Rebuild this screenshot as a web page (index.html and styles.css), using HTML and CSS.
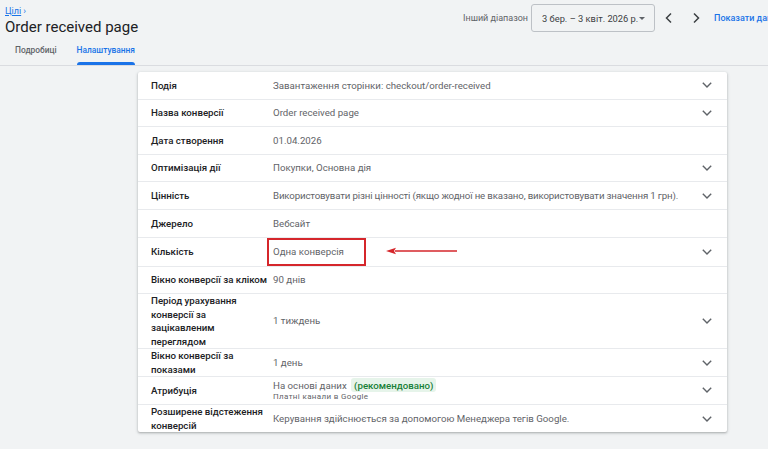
FILE: index.html
```html
<!DOCTYPE html>
<html lang="uk">
<head>
<meta charset="utf-8">
<title>Order received page</title>
<link rel="stylesheet" href="styles.css">
</head>
<body>
<header class="top">
  <div class="title-block">
    <div class="crumbs"><a class="crumb" href="#">Цілі</a><span class="crumb-sep">›</span></div>
    <h1 class="title">Order received page</h1>
  </div>
  <div class="controls">
    <span class="range-label">Інший діапазон</span>
    <div class="range-select">
      <span>3 бер. – 3 квіт. 2026 р.</span>
      <span class="tri"></span>
    </div>
    <svg class="nav" width="16" height="16" viewBox="0 0 16 16"><path d="M10 3.5 5.5 8l4.5 4.5" fill="none" stroke="#3c4043" stroke-width="1.5"/></svg>
    <svg class="nav" width="16" height="16" viewBox="0 0 16 16"><path d="M6 3.5 10.5 8 6 12.5" fill="none" stroke="#3c4043" stroke-width="1.5"/></svg>
    <span class="show">Показати дані</span>
  </div>
</header>
<nav class="tabs">
  <span class="tab">Подробиці</span>
  <span class="tab active">Налаштування</span>
</nav>
<main class="card">
  <div class="row"><div class="label">Подія</div><div class="value">Завантаження сторінки: checkout/order-received</div><div class="chev"><svg width="10" height="6" viewBox="0 0 10 6"><path d="M.8 .8 5 5 9.2 .8" fill="none" stroke="#5f6368" stroke-width="1.4"/></svg></div></div>
  <div class="row"><div class="label">Назва конверсії</div><div class="value">Order received page</div><div class="chev"><svg width="10" height="6" viewBox="0 0 10 6"><path d="M.8 .8 5 5 9.2 .8" fill="none" stroke="#5f6368" stroke-width="1.4"/></svg></div></div>
  <div class="row"><div class="label">Дата створення</div><div class="value">01.04.2026</div><div class="chev"></div></div>
  <div class="row"><div class="label">Оптимізація дії</div><div class="value">Покупки, Основна дія</div><div class="chev"><svg width="10" height="6" viewBox="0 0 10 6"><path d="M.8 .8 5 5 9.2 .8" fill="none" stroke="#5f6368" stroke-width="1.4"/></svg></div></div>
  <div class="row"><div class="label">Цінність</div><div class="value value-tight">Використовувати різні цінності (якщо жодної не вказано, використовувати значення 1 грн).</div><div class="chev"><svg width="10" height="6" viewBox="0 0 10 6"><path d="M.8 .8 5 5 9.2 .8" fill="none" stroke="#5f6368" stroke-width="1.4"/></svg></div></div>
  <div class="row"><div class="label">Джерело</div><div class="value">Вебсайт</div><div class="chev"></div></div>
  <div class="row"><div class="label">Кількість</div><div class="value value-inline"><span class="highlight">Одна конверсія</span><span class="arrow"><svg width="72" height="10" viewBox="0 0 72 10"><path d="M9 5H71" stroke="#d5262b" stroke-width="1.4"/><path d="M0 5 10 1.8 8 5 10 8.2Z" fill="#d5262b"/></svg></span></div><div class="chev"><svg width="10" height="6" viewBox="0 0 10 6"><path d="M.8 .8 5 5 9.2 .8" fill="none" stroke="#5f6368" stroke-width="1.4"/></svg></div></div>
  <div class="row"><div class="label">Вікно конверсії за кліком</div><div class="value">90 днів</div><div class="chev"></div></div>
  <div class="row"><div class="label">Період урахування конверсії за зацікавленим переглядом</div><div class="value">1 тиждень</div><div class="chev"><svg width="10" height="6" viewBox="0 0 10 6"><path d="M.8 .8 5 5 9.2 .8" fill="none" stroke="#5f6368" stroke-width="1.4"/></svg></div></div>
  <div class="row"><div class="label">Вікно конверсії за показами</div><div class="value">1 день</div><div class="chev"><svg width="10" height="6" viewBox="0 0 10 6"><path d="M.8 .8 5 5 9.2 .8" fill="none" stroke="#5f6368" stroke-width="1.4"/></svg></div></div>
  <div class="row"><div class="label">Атрибуція</div><div class="value"><div>На основі даних <span class="badge">(рекомендовано)</span></div><div class="sub">Платні канали в Google</div></div><div class="chev"><svg width="10" height="6" viewBox="0 0 10 6"><path d="M.8 .8 5 5 9.2 .8" fill="none" stroke="#5f6368" stroke-width="1.4"/></svg></div></div>
  <div class="row"><div class="label">Розширене відстеження конверсій</div><div class="value">Керування здійснюється за допомогою Менеджера тегів Google.</div><div class="chev"><svg width="10" height="6" viewBox="0 0 10 6"><path d="M.8 .8 5 5 9.2 .8" fill="none" stroke="#5f6368" stroke-width="1.4"/></svg></div></div>
</main>
</body>
</html>
```

FILE: styles.css
```css
* { box-sizing: border-box; }
html, body { margin: 0; }
body {
  background: #f1f3f4;
  font-family: Roboto, "Noto Sans", Arial, sans-serif;
  color: #202124;
  width: 768px;
  height: 449px;
  overflow: hidden;
}
.top {
  display: flex;
  justify-content: space-between;
  align-items: flex-start;
  height: 40px;
  padding-left: 5px;
}
.title-block { padding-top: 6px; }
.crumbs { font-size: 9px; line-height: 11px; height: 11px; }
.crumb { color: #1a73e8; text-decoration: underline; }
.crumb-sep { color: #1a73e8; margin-left: 2px; }
.title {
  margin: 0;
  font-size: 15px;
  font-weight: 400;
  line-height: 20px;
  color: #202124;
}
.controls {
  display: flex;
  align-items: center;
  padding-top: 4px;
  white-space: nowrap;
  width: 305px;
  overflow: hidden;
  flex-shrink: 0;
}
.range-label { font-size: 9px; color: #5f6368; margin-right: 3px; flex-shrink: 0; }
.range-select {
  display: flex;
  align-items: center;
  justify-content: space-between;
  width: 124px;
  height: 28px;
  border: 1px solid #bdc1c6;
  border-radius: 3px;
  padding: 0 9px 0 10px;
  font-size: 9.3px;
  color: #3c4043;
  flex-shrink: 0;
}
.tri {
  width: 0; height: 0;
  border-left: 3.5px solid transparent;
  border-right: 3.5px solid transparent;
  border-top: 3.5px solid #5f6368;
}
.nav { flex-shrink: 0; margin-left: 6px; margin-right: 5px; }
.show { font-size: 9px; color: #1a73e8; font-weight: 500; margin-left: 5px; flex-shrink: 0; }
.tabs {
  display: flex;
  gap: 19px;
  padding-left: 15px;
  height: 26px;
  border-bottom: 1px solid #dadce0;
}
.tab {
  font-size: 8.4px;
  color: #5f6368;
  font-weight: 500;
  line-height: 20px;
  height: 25px;
  position: relative;
}
.tab.active { color: #1a73e8; padding: 0 1px; }
.tab.active::after {
  content: "";
  position: absolute;
  left: 1px; right: 1px; bottom: 0;
  height: 3px;
  background: #1a73e8;
  border-radius: 3px 3px 0 0;
}
.card {
  margin: 6px 0 0 138px;
  width: 589px;
  background: #fff;
  border-radius: 2px;
  box-shadow: 0 1px 2px rgba(60,64,67,.3), 0 1px 3px 1px rgba(60,64,67,.1);
}
.row {
  display: grid;
  grid-template-columns: 122px 1fr 24px;
  align-items: center;
  min-height: 27.6px;
  padding: 0 8px 0 13px;
  border-bottom: 1px solid #e8eaed;
  font-size: 9.7px;
  line-height: 13.5px;
}
.row:last-child { border-bottom: 0; }
.label { color: #202124; font-weight: 500; padding-right: 4px; }
.value { color: #5f6368; display: flex; flex-direction: column; justify-content: center; white-space: nowrap; }
.value-tight { letter-spacing: -0.15px; }
.value-inline { flex-direction: row; align-items: center; justify-content: flex-start; }
.chev { display: flex; justify-content: center; align-items: center; }
.highlight {
  display: inline-block;
  margin-left: -6px;
  padding: 5px 20px 6px 4px;
  border: 2px solid #d5262b;
  line-height: 13px;
}
.arrow { display: flex; margin-left: 20px; margin-top: -2px; }
.badge {
  background: #e6f4ea;
  color: #188038;
  font-weight: 500;
  padding: 1.5px 3px;
  border-radius: 3px;
  margin-left: 2px;
}
.sub { font-size: 8px; letter-spacing: 0.35px; line-height: 10px; color: #5f6368; }
```
